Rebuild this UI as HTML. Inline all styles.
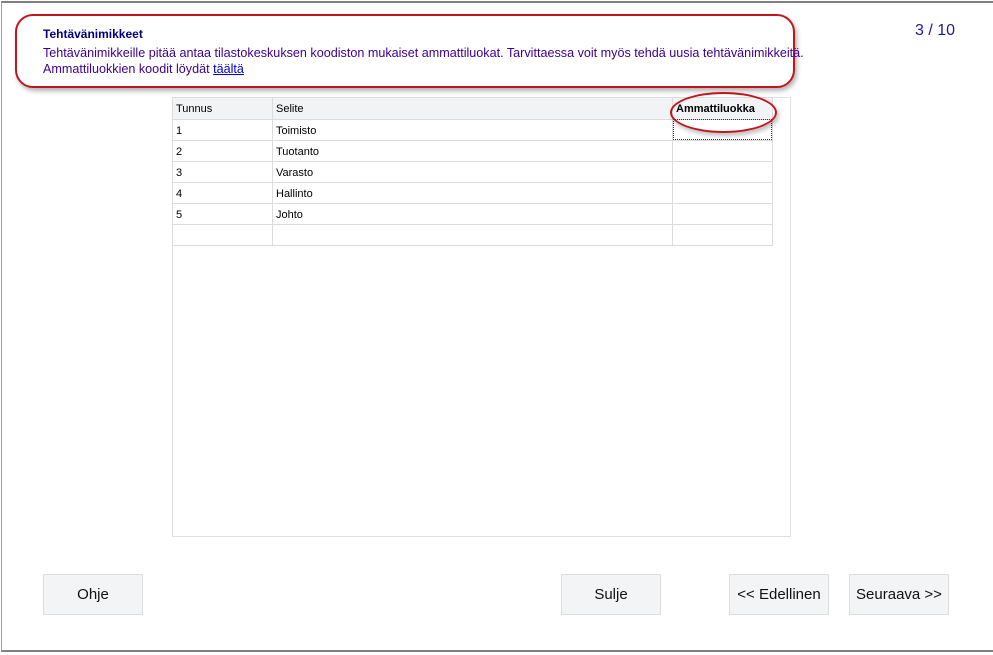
<!DOCTYPE html>
<html><head><meta charset="utf-8"><style>
body{margin:0;width:993px;height:655px;background:#fff;position:relative;overflow:hidden;font-family:"Liberation Sans",sans-serif}
.frame{position:absolute;left:1px;top:1px;width:993px;height:651px;border-top:2px solid #808080;border-left:1px solid #a0a0a0;border-bottom:2px solid #808080;box-sizing:border-box}
.note{position:absolute;left:15px;top:14px;width:780px;height:74px;border:2px solid #c0161c;border-radius:18px;box-shadow:2px 3px 5px rgba(0,0,0,.3);box-sizing:border-box}
.t1{position:absolute;left:43px;top:27px;font-size:12px;font-weight:bold;color:#000080}
.t2{position:absolute;left:43px;top:45px;font-size:12.6px;color:#3a0090;line-height:16px}
.t2 a{color:#0000cc;text-decoration:underline}
.pg{position:absolute;left:915px;top:22px;font-size:16px;color:#1a1aa0}
.grid{position:absolute;left:172px;top:97px;width:619px;height:440px;border:1px solid #e0e0e0;box-sizing:border-box}
table{position:absolute;left:172px;top:97px;border-collapse:collapse;font-size:11px;color:#000}
td{border:1px solid #dcdcdc;height:21px;padding:1px 0 0 3px;box-sizing:border-box}
tr.h td{background:#f2f3f5;height:22px}
.ell{position:absolute;left:670px;top:92px;width:107px;height:41px;border:2px solid #c0161c;border-radius:50%;box-sizing:border-box;box-shadow:2px 3px 4px rgba(0,0,0,.25)}
.dot{position:absolute;left:673px;top:119px;width:99px;height:21px;border:1px dotted #333;box-sizing:border-box}
.btn{position:absolute;top:574px;width:100px;height:41px;background:#f3f4f6;border:1px solid #ddd;box-sizing:border-box;font-size:15px;display:flex;align-items:center;justify-content:center;color:#111}
</style></head><body>
<div class="frame"></div>
<div class="note"></div>
<div class="t1">Tehtävänimikkeet</div>
<div class="t2">Tehtävänimikkeille pitää antaa tilastokeskuksen koodiston mukaiset ammattiluokat. Tarvittaessa voit myös tehdä uusia tehtävänimikkeitä.<br>Ammattiluokkien koodit löydät <a>täältä</a></div>
<div class="pg">3 / 10</div>
<div class="grid"></div>
<table>
<tr class="h"><td style="width:100px">Tunnus</td><td style="width:400px">Selite</td><td style="width:100px;font-weight:bold">Ammattiluokka</td></tr>
<tr><td>1</td><td>Toimisto</td><td></td></tr>
<tr><td>2</td><td>Tuotanto</td><td></td></tr>
<tr><td>3</td><td>Varasto</td><td></td></tr>
<tr><td>4</td><td>Hallinto</td><td></td></tr>
<tr><td>5</td><td>Johto</td><td></td></tr>
<tr><td></td><td></td><td></td></tr>
</table>
<div class="dot"></div>
<div class="ell"></div>
<div class="btn" style="left:43px">Ohje</div>
<div class="btn" style="left:561px">Sulje</div>
<div class="btn" style="left:729px">&lt;&lt; Edellinen</div>
<div class="btn" style="left:849px">Seuraava &gt;&gt;</div>
</body></html>
